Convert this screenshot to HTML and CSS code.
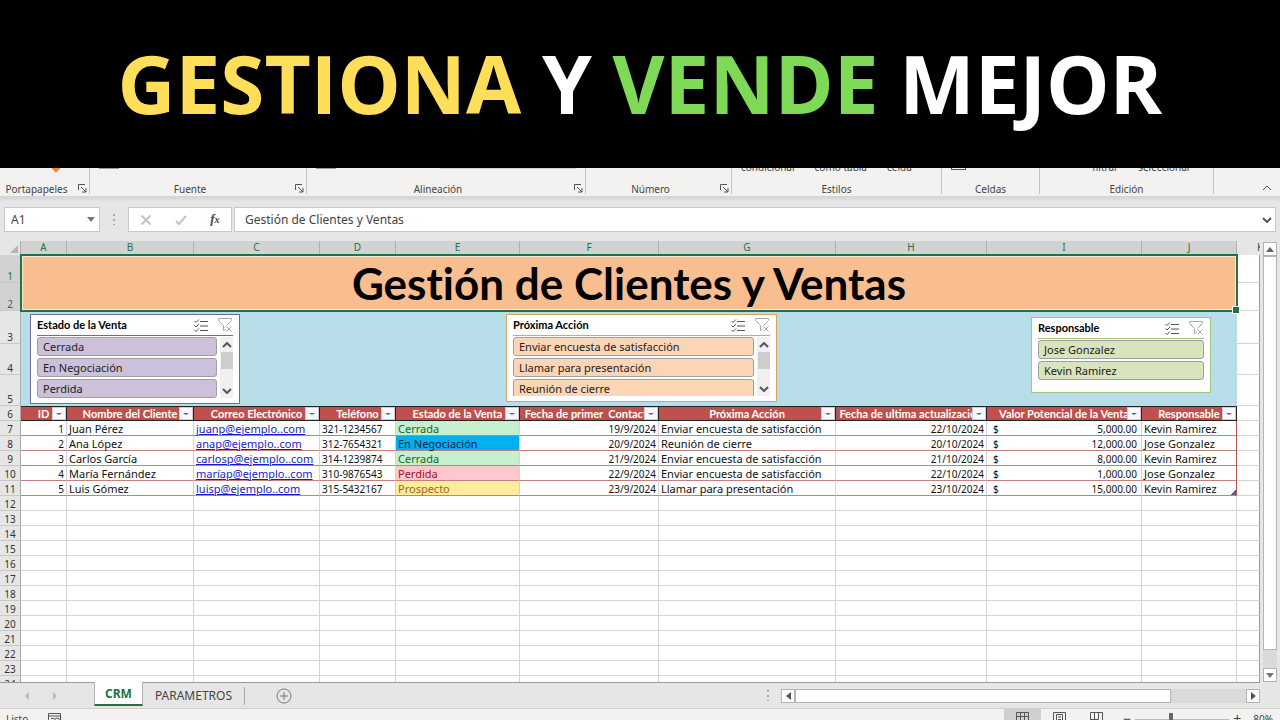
FILE: index.html
```html
<!DOCTYPE html>
<html lang="es">
<head>
  <meta charset="UTF-8">
  <meta name="viewport" content="width=device-width, initial-scale=1.0">
  <title>Gestión de Clientes y Ventas</title>
  <link rel="stylesheet" href="styles.css">
</head>
<body>
  <svg width="0" height="0" class="sprite">
    <symbol id="launcher" viewBox="0 0 9 9"><path d="M0.5 6V0.5H7M3 3l5 5M8 4v4H4" /></symbol>
    <symbol id="multi" viewBox="0 0 14 13"><path d="M0.500 2l1.500 1.500L5 0.500M0.500 6.500L2 8l3-3M0.500 11L2 12.500l3-3M6 2.500h8M6 7h8M6 11.500h8" /></symbol>
    <symbol id="funnel" viewBox="0 0 14 14"><path d="M0.500 0.500h13v2L8.500 7.500M0.500 0.500v2L5.500 7.500v5l2.500-1.500M8.500 8.500l5 5M13.500 8.500l-5 5" /></symbol>
    <symbol id="chev-up" viewBox="0 0 10 6"><path d="M1 5l4-4 4 4" /></symbol>
    <symbol id="chev-down" viewBox="0 0 10 6"><path d="M1 1l4 4 4-4" /></symbol>
  </svg>

  <header class="banner">
    <h1><span class="yellow">GESTIONA</span> Y <span class="green">VENDE</span> MEJOR</h1>
  </header>

  <div class="ribbon">
    <div class="group portapapeles">
      <div class="commands"><span class="brush"></span></div>
      <div class="caption"><span>Portapapeles</span><button aria-label="Portapapeles"><svg><use href="#launcher" /></svg></button></div>
    </div>
    <div class="group fuente">
      <div class="commands"><span class="stub"></span></div>
      <div class="caption"><span>Fuente</span><button aria-label="Fuente"><svg><use href="#launcher" /></svg></button></div>
    </div>
    <div class="group alineacion">
      <div class="commands"><span class="stub"></span><span class="stub long"></span></div>
      <div class="caption"><span>Alineación</span><button aria-label="Alineación"><svg><use href="#launcher" /></svg></button></div>
    </div>
    <div class="group numero">
      <div class="commands"></div>
      <div class="caption"><span>Número</span><button aria-label="Número"><svg><use href="#launcher" /></svg></button></div>
    </div>
    <div class="group estilos">
      <div class="commands"><span>condicional</span><span>como tabla</span><span>celda</span></div>
      <div class="caption"><span>Estilos</span></div>
    </div>
    <div class="group celdas">
      <div class="commands"><span class="box"></span></div>
      <div class="caption"><span>Celdas</span></div>
    </div>
    <div class="group edicion">
      <div class="commands right"><span>filtrar</span><span>seleccionar</span></div>
      <div class="caption"><span>Edición</span></div>
    </div>
    <button class="collapse" aria-label="Contraer"><svg><use href="#chev-up" /></svg></button>
  </div>

  <div class="formula-bar">
    <div class="name-box">
      <input type="text" value="A1" aria-label="Cuadro de nombres">
      <span class="tri down"></span>
    </div>
    <span class="dots"></span>
    <div class="fx-box">
      <button aria-label="Cancelar"><svg viewBox="0 0 12 12"><path class="thick" d="M1.500 1.500l9 9M10.500 1.500l-9 9" /></svg></button>
      <button aria-label="Introducir"><svg viewBox="0 0 12 12"><path class="thick" d="M1 7l3 3 7-8" /></svg></button>
      <button class="fx" aria-label="Insertar función"><i>f</i><small>x</small></button>
    </div>
    <div class="formula">
      <input type="text" value="Gestión de Clientes y Ventas" aria-label="Barra de fórmulas">
      <svg><use href="#chev-down" /></svg>
    </div>
  </div>

  <main class="workspace">
    <div class="sheet">
      <table>
        <colgroup>
          <col class="c-row"><col class="c-a"><col class="c-b"><col class="c-c"><col class="c-d"><col class="c-e">
          <col class="c-f"><col class="c-g"><col class="c-h"><col class="c-i"><col class="c-j"><col>
        </colgroup>
        <thead>
          <tr class="letters">
            <th class="corner"><span></span></th><th>A</th><th>B</th><th>C</th><th>D</th><th>E</th><th>F</th><th>G</th><th>H</th><th>I</th><th>J</th><th class="rest">K</th>
          </tr>
        </thead>
        <tbody id="rows">
          <tr class="title-row">
            <th class="on">1</th>
            <td colspan="10" rowspan="2" class="title">Gestión de Clientes y Ventas<span class="handle"></span></td>
            <td></td>
          </tr>
          <tr class="title-row"><th class="on">2</th><td></td></tr>
          <tr class="band-row first"><th>3</th><td colspan="10" rowspan="3" class="band"></td><td></td></tr>
          <tr class="band-row"><th>4</th><td></td></tr>
          <tr class="band-row"><th>5</th><td></td></tr>
          <tr class="fields">
            <th>6</th>
            <th scope="col">ID<button class="filter" aria-label="Filtrar ID"></button></th>
            <th scope="col">Nombre del Cliente<button class="filter" aria-label="Filtrar nombre"></button></th>
            <th scope="col">Correo Electrónico<button class="filter" aria-label="Filtrar correo"></button></th>
            <th scope="col">Teléfono<button class="filter" aria-label="Filtrar teléfono"></button></th>
            <th scope="col">Estado de la Venta<button class="filter" aria-label="Filtrar estado"></button></th>
            <th scope="col">Fecha de primer&nbsp; Contacto<button class="filter" aria-label="Filtrar primer contacto"></button></th>
            <th scope="col">Próxima Acción<button class="filter" aria-label="Filtrar acción"></button></th>
            <th scope="col">Fecha de ultima actualización<button class="filter" aria-label="Filtrar actualización"></button></th>
            <th scope="col">Valor Potencial de la Venta<button class="filter" aria-label="Filtrar valor"></button></th>
            <th scope="col">Responsable<button class="filter" aria-label="Filtrar responsable"></button></th>
            <td></td>
          </tr>
          <tr class="data">
            <th>7</th><td class="num">1</td><td>Juan Pérez</td><td><a href="#">juanp@ejemplo..com</a></td><td class="tel">321-1234567</td><td class="cerrada">Cerrada</td><td class="num">19/9/2024</td><td>Enviar encuesta de satisfacción</td><td class="num">22/10/2024</td><td><div class="money"><span>$</span><span>5,000.00</span></div></td><td>Kevin Ramirez</td><td></td>
          </tr>
          <tr class="data">
            <th>8</th><td class="num">2</td><td>Ana López</td><td><a href="#">anap@ejemplo..com</a></td><td class="tel">312-7654321</td><td class="negociacion">En Negociación</td><td class="num">20/9/2024</td><td>Reunión de cierre</td><td class="num">20/10/2024</td><td><div class="money"><span>$</span><span>12,000.00</span></div></td><td>Jose Gonzalez</td><td></td>
          </tr>
          <tr class="data">
            <th>9</th><td class="num">3</td><td>Carlos García</td><td><a href="#">carlosp@ejemplo..com</a></td><td class="tel">314-1239874</td><td class="cerrada">Cerrada</td><td class="num">21/9/2024</td><td>Enviar encuesta de satisfacción</td><td class="num">21/10/2024</td><td><div class="money"><span>$</span><span>8,000.00</span></div></td><td>Kevin Ramirez</td><td></td>
          </tr>
          <tr class="data">
            <th>10</th><td class="num">4</td><td>María Fernández</td><td><a href="#">maríap@ejemplo..com</a></td><td class="tel">310-9876543</td><td class="perdida">Perdida</td><td class="num">22/9/2024</td><td>Enviar encuesta de satisfacción</td><td class="num">22/10/2024</td><td><div class="money"><span>$</span><span>1,000.00</span></div></td><td>Jose Gonzalez</td><td></td>
          </tr>
          <tr class="data">
            <th>11</th><td class="num">5</td><td>Luis Gómez</td><td><a href="#">luisp@ejemplo..com</a></td><td class="tel">315-5432167</td><td class="prospecto">Prospecto</td><td class="num">23/9/2024</td><td>Llamar para presentación</td><td class="num">23/10/2024</td><td><div class="money"><span>$</span><span>15,000.00</span></div></td><td class="table-end">Kevin Ramirez</td><td></td>
          </tr>
        </tbody>
      </table>

      <section class="slicer estado">
        <div class="slicer-head"><h2>Estado de la Venta</h2><svg class="multi"><use href="#multi" /></svg><svg class="funnel"><use href="#funnel" /></svg></div>
        <div class="slicer-body">
          <div class="items"><button>Cerrada</button><button>En Negociación</button><button>Perdida</button></div>
          <div class="mini-scroll"><svg><use href="#chev-up" /></svg><span></span><svg><use href="#chev-down" /></svg></div>
        </div>
      </section>
      <section class="slicer accion">
        <div class="slicer-head"><h2>Próxima Acción</h2><svg class="multi"><use href="#multi" /></svg><svg class="funnel"><use href="#funnel" /></svg></div>
        <div class="slicer-body">
          <div class="items"><button>Enviar encuesta de satisfacción</button><button>Llamar para presentación</button><button>Reunión de cierre</button></div>
          <div class="mini-scroll"><svg><use href="#chev-up" /></svg><span></span><svg><use href="#chev-down" /></svg></div>
        </div>
      </section>
      <section class="slicer responsable">
        <div class="slicer-head"><h2>Responsable</h2><svg class="multi"><use href="#multi" /></svg><svg class="funnel"><use href="#funnel" /></svg></div>
        <div class="slicer-body">
          <div class="items"><button>Jose Gonzalez</button><button>Kevin Ramirez</button></div>
        </div>
      </section>
    </div>

    <div class="vscroll">
      <button aria-label="Arriba"><span class="tri up"></span></button>
      <span class="thumb"></span>
      <span class="track"></span>
      <button aria-label="Abajo"><span class="tri down"></span></button>
    </div>
  </main>

  <nav class="tabs">
    <div class="tab-nav"><span class="tri left"></span><span class="tri right"></span></div>
    <button class="tab active">CRM</button>
    <button class="tab">PARAMETROS</button>
    <button class="add" aria-label="Hoja nueva"><svg viewBox="0 0 16 16"><circle cx="8" cy="8" r="7" /><path d="M8 4v8M4 8h8" /></svg></button>
    <span class="dots"></span>
    <div class="hscroll">
      <button aria-label="Izquierda"><span class="tri left"></span></button>
      <span class="thumb"></span>
      <span class="track"></span>
      <button aria-label="Derecha"><span class="tri right"></span></button>
    </div>
  </nav>

  <footer class="status">
    <span class="ready">Listo</span>
    <svg class="macro" viewBox="0 0 14 12"><path d="M0.500 0.500h12v11h-12zM0.500 3h12M3 5.500h3M3 8.500h3" /><circle cx="9" cy="7.500" r="2.500" /></svg>
    <div class="views">
      <button class="active" aria-label="Normal"><svg viewBox="0 0 13 13"><path d="M0.500 0.500h12v12h-12zM4.500 0.500v12M8.500 0.500v12M0.500 4.500h12M0.500 8.500h12" /></svg></button>
      <button aria-label="Diseño de página"><svg viewBox="0 0 13 13"><path d="M0.500 0.500h12v12h-12zM3.500 2.500h6v10h-6zM5 5h3M5 7.500h3" /></svg></button>
      <button aria-label="Salto de página"><svg viewBox="0 0 13 13"><path d="M0.500 0.500h12v12h-12zM4.500 0.500v7M8.500 0.500v7M0.500 7.500h8" /></svg></button>
    </div>
    <div class="zoom">
      <button aria-label="Alejar">−</button>
      <input type="range" min="0" max="100" value="38" aria-label="Zoom">
      <button aria-label="Acercar">+</button>
      <span>80%</span>
    </div>
  </footer>

  <script>
    // filas vacías debajo de la tabla
    const rows = document.getElementById('rows');
    for (let n = 12; n <= 24; n++) {
      const tr = document.createElement('tr');
      tr.innerHTML = `<th>${n}</th>` + '<td></td>'.repeat(11);
      rows.appendChild(tr);
    }
  </script>
</body>
</html>
```

FILE: styles.css
```css
:root {
  --green: #217346;
  --chrome: #e6e6e6;
  --ribbon: #f3f2f1;
  --line: #d4d4d4;
  --red: #c0504d;
  --ui: "Noto Sans", "Open Sans", sans-serif;
  --heading: Lato, "Noto Sans", sans-serif;
}

* {
  box-sizing: border-box;
}

body {
  margin: 0;
  height: 100vh;
  display: flex;
  flex-direction: column;
  overflow: hidden;
  background: var(--chrome);
  color: #444;
  font-family: var(--ui);
  font-size: 12px;
}

button {
  padding: 0;
  border: none;
  background: none;
  color: inherit;
  font: inherit;
}

input {
  border: none;
  outline: none;
  background: none;
  color: inherit;
  font: inherit;
}

svg {
  fill: none;
  stroke: #555;
  flex: none;
}

.sprite {
  position: absolute;
}

.tri {
  border: 4px solid transparent;
}

.tri.up { border-bottom: 5px solid #666; border-top: 0; }
.tri.down { border-top: 5px solid #777; border-bottom: 0; }
.tri.left { border-right: 5px solid #555; border-left: 0; }
.tri.right { border-left: 5px solid #555; border-right: 0; }

.dots {
  width: 2px;
  height: 11px;
  background: repeating-linear-gradient(#aaa 0 2px, transparent 2px 5px);
}

/* Encabezado */
.banner {
  flex: none;
  height: 168px;
  background: #000;
  color: #fff;
  text-align: center;
}

.banner h1 {
  margin: 0;
  font: bold 80px/166px "Open Sans", "Noto Sans", sans-serif;
  white-space: nowrap;
}

.yellow { color: #ffde59; }
.green { color: #7ed957; }

/* Cinta de opciones */
.ribbon {
  flex: none;
  height: 28px;
  display: flex;
  align-items: flex-end;
  overflow: hidden;
  background: var(--ribbon);
  font-size: 10px;
}

.group {
  flex: none;
  margin-bottom: 2px;
  border-right: 1px solid #c4c4c4;
}

.portapapeles { width: 90px; }
.fuente { width: 217px; }
.alineacion { width: 279px; }
.numero { width: 146px; }
.estilos { width: 210px; }
.celdas { width: 98px; }
.edicion { width: 174px; }

.commands {
  height: 20px;
  padding: 0 9px;
  display: flex;
  align-items: flex-start;
  gap: 20px;
  line-height: 14px;
}

.commands.right {
  justify-content: flex-end;
  padding-right: 22px;
}

.stub {
  width: 20px;
  height: 9px;
  border-bottom: 1px solid #999;
}

.stub.long {
  width: 138px;
  margin-left: 84px;
  border-color: #ccc;
}

.brush {
  width: 8px;
  height: 8px;
  margin: 3px 0 0 43px;
  background: #e08b3c;
  transform: rotate(45deg);
}

.box {
  width: 15px;
  height: 10px;
  border: 1px solid #555;
}

.caption {
  height: 14px;
  padding-top: 3px;
  display: flex;
  align-items: center;
  line-height: 14px;
}

.caption span {
  flex: 1;
  text-align: center;
}

.caption button {
  width: 16px;
  height: 9px;
  padding-left: 5px;
  display: flex;
}

.caption svg {
  width: 9px;
  height: 9px;
}

.collapse {
  margin: 0 8px 2px auto;
}

.collapse svg,
.formula svg {
  width: 10px;
  height: 6px;
}

/* Barra de fórmulas */
.formula-bar {
  flex: none;
  height: 45px;
  padding: 11px 4px 9px;
  display: flex;
  align-items: center;
  background: linear-gradient(#d2d2d2, var(--chrome) 6px);
}

.name-box,
.fx-box,
.formula {
  height: 25px;
  display: flex;
  align-items: center;
  background: #fff;
  border: 1px solid #c9c9c9;
}

.name-box {
  width: 96px;
  padding: 0 4px 0 6px;
}

.name-box input {
  flex: 1;
  min-width: 0;
  padding: 0;
}

.formula-bar .dots {
  margin: 0 13px;
}

.fx-box {
  width: 104px;
  justify-content: space-around;
}

.fx-box svg {
  width: 12px;
  height: 12px;
  display: block;
  stroke: #c4c4c4;
}

.thick {
  stroke-width: 2;
}

.fx {
  font: bold 13px/16px "Liberation Serif", serif;
}

.fx small {
  font-size: 10px;
  font-style: italic;
}

.formula {
  flex: 1;
  margin-left: 2px;
  padding: 0 3px 0 10px;
}

.formula input {
  flex: 1;
  padding: 0;
}

.formula svg {
  stroke-width: 2;
}

/* Hoja */
.workspace {
  flex: 1;
  min-height: 0;
  display: flex;
}

.sheet {
  flex: 1;
  min-width: 0;
  position: relative;
  overflow: hidden;
}

table {
  width: 100%;
  table-layout: fixed;
  border-collapse: separate;
  border-spacing: 0;
  background: #fff;
  color: #111;
  font-size: 10px;
  line-height: 12px;
}

.c-row { width: 21px; }
.c-a { width: 46px; }
.c-b { width: 127px; }
.c-c { width: 126px; }
.c-d { width: 76px; }
.c-e { width: 124px; }
.c-f { width: 139px; }
.c-g { width: 177px; }
.c-h { width: 151px; }
.c-i { width: 155px; }
.c-j { width: 95px; }

td,
th {
  height: 15px;
  padding: 2px 2px 0;
  border-right: 1px solid var(--line);
  border-bottom: 1px solid var(--line);
  text-align: left;
  white-space: nowrap;
}

tbody th:first-child {
  padding: 2px 0 0;
  background: var(--chrome);
  border-right-color: #aaa;
  border-bottom-color: #c8c8c8;
  color: #333;
  font-weight: normal;
  text-align: center;
  vertical-align: bottom;
}

tbody td:last-child {
  border-right-color: #999;
}

.letters th {
  height: 14px;
  padding: 0;
  background: #d2d2d2;
  border-right-color: #b0b0b0;
  border-bottom: none;
  color: var(--green);
  font-weight: normal;
  text-align: center;
  vertical-align: top;
}

.letters .corner {
  background: var(--chrome);
  vertical-align: bottom;
}

.corner span {
  display: block;
  margin: 0 0 2px 10px;
  width: 0;
  border-left: 8px solid transparent;
  border-bottom: 8px solid #b4b4b4;
}

.letters .rest {
  padding-left: 20px;
  background: var(--chrome);
  border-right: none;
  color: #444;
  text-align: left;
  overflow: hidden;
}

tbody th.on {
  background: #d2d2d2;
  color: var(--green);
}

.title-row th,
.title-row td {
  height: 28px;
}

.band-row th,
.band-row td {
  height: 31px;
}

.band-row.first th,
.band-row.first td {
  height: 33px;
}

.title-row .title {
  position: relative;
  padding: 0;
  background: #f9be8f;
  border: none;
  outline: 2px solid var(--green);
  outline-offset: -1px;
  box-shadow: inset 0 0 0 2px #f3ead6;
  color: #000;
  font: bold 44px/54px var(--heading);
  font-variant-ligatures: none;
  text-align: center;
}

.handle {
  position: absolute;
  right: -3px;
  bottom: -3px;
  width: 6px;
  height: 6px;
  background: var(--green);
  border: 1px solid #fff;
  box-sizing: content-box;
}

.band-row .band {
  background: #b7dde8;
  border: none;
}

.fields th[scope] {
  position: relative;
  padding: 0;
  background: var(--red);
  border-top: 1px solid #222;
  border-bottom-color: #222;
  border-right-color: #222;
  color: #fff;
  font: bold 11px/13px var(--heading);
  text-align: center;
}

.filter {
  position: absolute;
  right: 0;
  bottom: 0;
  width: 14px;
  height: 13px;
  display: flex;
  align-items: center;
  justify-content: center;
  background: #f8f8fa;
  border: 1px solid #ccd;
}

.filter::after {
  content: "";
  border: 3px solid transparent;
  border-top: 2px solid #666;
  border-bottom: 0;
}

.data td {
  border-bottom-color: #c77f7d;
  font-size: 11px;
}

.data td:nth-child(11) {
  border-right-color: var(--red);
}

.data td:last-child {
  border-bottom-color: var(--line);
}

.data .num,
.data .tel,
.money {
  font-size: 10px;
}

.data .num {
  text-align: right;
}

.data a {
  color: #1a1ad0;
}

.money {
  display: flex;
  justify-content: space-between;
  padding: 0 2px 0 4px;
}

.cerrada { background: #c6efce; color: #15691f; }
.negociacion { background: #00b0f0; color: #0c2038; }
.perdida { background: #ffc7ce; color: #a01020; }
.prospecto { background: #ffeb9c; color: #9c6a10; }

.table-end {
  background: linear-gradient(135deg, transparent 50%, #5b5b9b 50%) right bottom / 5px 5px no-repeat;
}

/* Segmentaciones flotantes sobre la hoja */
.slicer {
  position: absolute;
  padding: 0 6px;
  display: flex;
  flex-direction: column;
  background: #fff;
  border: 1px solid;
  color: #222;
  font-size: 11px;
}

.slicer.estado { left: 30px; top: 73px; width: 210px; height: 90px; border-color: #75699b; }
.slicer.accion { left: 506px; top: 73px; width: 271px; height: 88px; border-color: #d9a566; }
.slicer.responsable { left: 1031px; top: 76px; width: 180px; height: 76px; border-color: #a9c47f; }

.slicer-head {
  height: 21px;
  padding-right: 1px;
  display: flex;
  align-items: center;
  gap: 10px;
  border-bottom: 1px solid;
  border-color: inherit;
}

.slicer h2 {
  flex: 1;
  margin: 0;
  color: #000;
  font: bold 11px/14px var(--heading);
}

.multi {
  width: 14px;
  height: 13px;
}

.funnel {
  width: 14px;
  height: 14px;
  stroke: #aaa;
}

.slicer-body {
  flex: 1;
  min-height: 0;
  margin: 1px 0 5px;
  display: flex;
  gap: 3px;
  overflow: hidden;
}

.items {
  flex: 1;
  display: flex;
  flex-direction: column;
  gap: 2px;
}

.items button {
  flex: none;
  height: 19px;
  padding: 0 5px;
  border: 1px solid #a0a0a0;
  border-radius: 3px;
  line-height: 16px;
  text-align: left;
}

.estado button { background: #ccc0da; }
.accion button { background: #fcd5b4; }
.responsable button { background: #d8e4bc; }

.mini-scroll {
  width: 13px;
  padding: 5px 0 4px;
  display: flex;
  flex-direction: column;
  align-items: center;
  background: #f0f0f0;
}

.mini-scroll svg {
  width: 10px;
  height: 6px;
  stroke-width: 2;
}

.mini-scroll span {
  width: 12px;
  height: 17px;
  margin: 4px 0 auto;
  background: #cdcdcd;
}

/* Barras de desplazamiento */
.vscroll {
  width: 20px;
  padding: 1px 3px 0;
  display: flex;
  flex-direction: column;
}

.vscroll button,
.hscroll button {
  flex: none;
  width: 14px;
  height: 14px;
  display: flex;
  align-items: center;
  justify-content: center;
  background: #fff;
  border: 1px solid #b4b4b4;
}

.thumb {
  background: #fff;
  border: 1px solid #b4b4b4;
}

.track {
  background: #dadada;
}

.vscroll .thumb { flex: 22; }
.vscroll .track { flex: 1; }

/* Pestañas */
.tabs {
  flex: none;
  height: 26px;
  margin-right: 20px;
  display: flex;
  align-items: center;
  border-top: 1px solid #999;
}

.tab-nav {
  width: 94px;
  padding: 0 37px 0 25px;
  display: flex;
  justify-content: space-between;
}

.tab-nav .tri {
  border-width: 4px 0;
}

.tab-nav .left { border-right: 4px solid #bbb; }
.tab-nav .right { border-left: 4px solid #bbb; }

.tab {
  height: 18px;
  padding: 0 12px;
  border-right: 1px solid #aaa;
  line-height: 16px;
}

.tab.active {
  align-self: flex-start;
  height: 24px;
  margin-top: -1px;
  padding: 2px 10px 0;
  background: #fff;
  border: 1px solid #b4b4b4;
  border-top: none;
  border-bottom: 2px solid var(--green);
  color: var(--green);
  font-weight: bold;
}

.add {
  margin: 0 auto 0 31px;
}

.add svg {
  width: 16px;
  height: 16px;
  display: block;
  stroke: #777;
}

.hscroll {
  width: 38%;
  margin-left: 12px;
  display: flex;
}

.hscroll .thumb { flex: 5; }
.hscroll .track { flex: 1; }

/* Barra de estado, asoma solo la parte superior */
.status {
  flex: none;
  height: 12px;
  padding-right: 7px;
  display: flex;
  align-items: flex-start;
  overflow: hidden;
  background: var(--ribbon);
  border-top: 1px solid #cfcfcf;
  font-size: 10px;
  line-height: 20px;
}

.ready {
  width: 48px;
  padding-left: 6px;
}

.macro {
  width: 14px;
  height: 12px;
  margin-top: 4px;
}

.views {
  margin-left: auto;
  display: flex;
}

.views button {
  width: 37px;
  height: 22px;
  padding: 3px 12px;
  display: flex;
  align-items: flex-start;
}

.views button.active {
  background: #cfcfcf;
}

.views svg {
  width: 13px;
  height: 13px;
}

.zoom {
  margin-left: 4px;
  display: flex;
  align-items: flex-start;
}

.zoom button {
  width: 16px;
  font-size: 14px;
}

.zoom input {
  width: 94px;
  height: 20px;
  margin: 0;
  appearance: none;
  background: linear-gradient(#bbb, #bbb) center / 100% 1px no-repeat;
}

.zoom input::-webkit-slider-thumb {
  appearance: none;
  width: 4px;
  height: 12px;
  background: #666;
}

.zoom span {
  margin-left: 8px;
}
```
